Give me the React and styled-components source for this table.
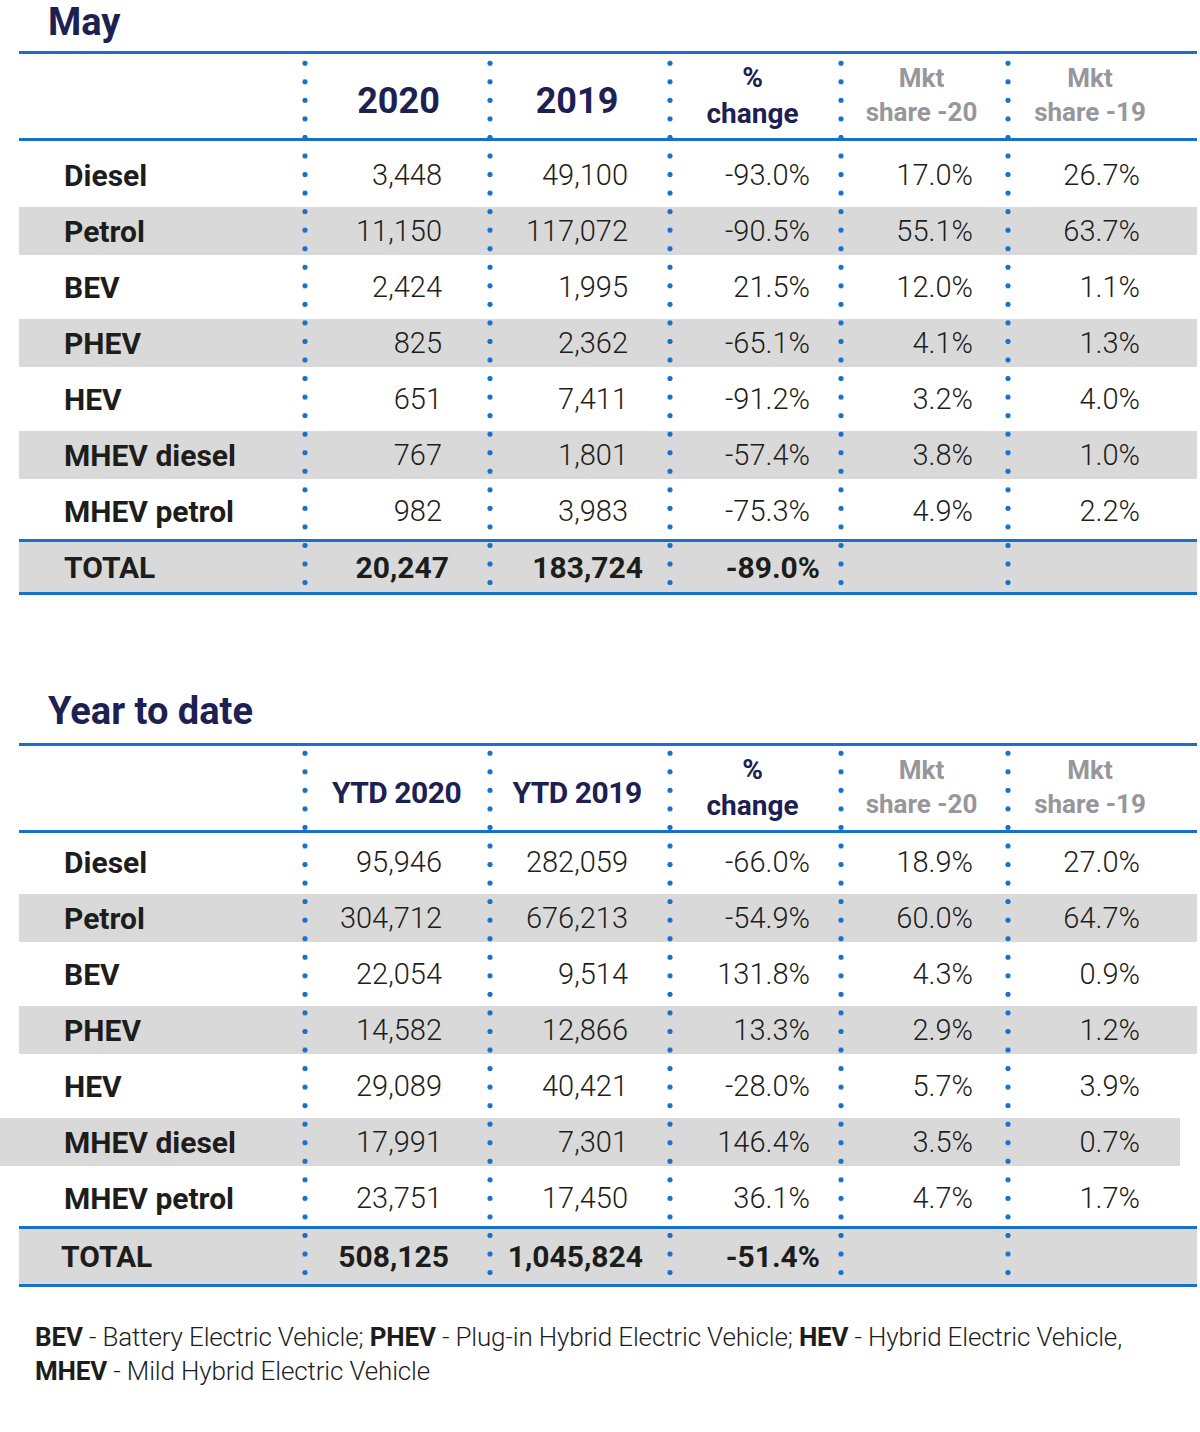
import React from "react";
import styled, { createGlobalStyle } from "styled-components";

const BLUE = "#1670cc";
const NAVY = "#1c2152";
const INK = "#1d1d1b";
const BAND = "#d9d9d9";
const COLS = "283px 185px 180px 171px 167px 192px";
const PAD = [45, 39, 28, 32, 57];
const TOTAL_PAD = [38, 24, 18, 32, 57];

const GlobalStyle = createGlobalStyle`
  body {
    margin: 0;
    background: #fff;
    font-family: Roboto, "Liberation Sans", sans-serif;
    color: ${INK};
  }
`;

const Page = styled.div`
  width: 1178px;
  padding-left: 19px;
`;

const Section = styled.section`
  margin-top: ${p => p.$top}px;
`;

const Title = styled.h2`
  margin: 0 0 ${p => p.$gap}px 29px;
  font-size: 38px;
  line-height: 44px;
  font-weight: 700;
  color: ${NAVY};
`;

const dot = `radial-gradient(circle, ${BLUE} 2.3px, transparent 2.9px)`;

const Table = styled.div`
  position: relative;
  border-top: 3px solid ${BLUE};
  border-bottom: 3px solid ${BLUE};

  /* dotted column separators lie over the row bands */
  &::after {
    content: "";
    position: absolute;
    top: ${p => p.$dotTop}px;
    bottom: 0;
    left: 0;
    right: 0;
    pointer-events: none;
    background-image: ${dot}, ${dot}, ${dot}, ${dot}, ${dot};
    background-size: 6px 18.55px;
    background-repeat: repeat-y;
    background-position: 283px 0, 468px 0, 648px 0, 819px 0, 986px 0;
  }
`;

const HeadRow = styled.div`
  display: grid;
  grid-template-columns: ${COLS};
  height: 84px;
  border-bottom: 3px solid ${BLUE};
`;

const HeadCell = styled.div`
  display: flex;
  flex-direction: column;
  align-items: center;
  justify-content: center;
  text-align: center;
  font-weight: 700;
  color: ${p => (p.$gray ? "#96969b" : NAVY)};
  font-size: ${p => p.$size}px;
  line-height: ${p => (p.$gray ? 34 : 36)}px;
  letter-spacing: ${p => (p.$size === 30 ? "-0.5px" : "0")};
  padding-top: ${p => (p.$year ? 9 : 0)}px;
  padding-bottom: ${p => (p.$gray ? 3 : 0)}px;
  padding-left: ${p => p.$shiftX || 0}px;
  padding-right: ${p => p.$trim || 0}px;
`;

const Body = styled.div`
  padding-top: ${p => p.$pad}px;
`;

const Row = styled.div`
  display: grid;
  grid-template-columns: ${COLS};
  align-items: center;
  height: 56px;
  box-sizing: border-box;
  background-image: ${p => (p.$band ? `linear-gradient(${BAND}, ${BAND})` : "none")};
  background-repeat: no-repeat;
  background-position: 0 center;
  background-size: ${p => (p.$shift ? "calc(100% - 17px)" : "100%")} 48px;
  margin-left: ${p => (p.$shift ? -19 : 0)}px;
  padding-left: ${p => (p.$shift ? 19 : 0)}px;
`;

const TotalRow = styled.div`
  display: grid;
  grid-template-columns: ${COLS};
  align-items: center;
  height: ${p => p.$height}px;
  border-top: 3px solid ${BLUE};
  background: ${BAND};
`;

const Label = styled.div`
  padding-left: ${p => p.$indent}px;
  font-size: 30px;
  font-weight: 700;
  white-space: nowrap;
`;

const Value = styled.div`
  text-align: right;
  padding-right: ${p => p.$pad}px;
  font-size: ${p => (p.$bold ? 30 : 29)}px;
  font-weight: ${p => (p.$bold ? 700 : 300)};
  white-space: nowrap;
`;

const Note = styled.p`
  margin: 33px 0 0 16px;
  font-size: 26px;
  line-height: 34px;
  font-weight: 300;
  letter-spacing: -0.15px;

  b {
    font-weight: 700;
  }
`;

const may = {
  title: "May",
  titleGap: 7,
  top: 0,
  heads: ["2020", "2019"],
  headSize: 36,
  headShift: 8,
  dotTop: 0,
  bodyPad: 6,
  rows: [
    ["Diesel", "3,448", "49,100", "-93.0%", "17.0%", "26.7%"],
    ["Petrol", "11,150", "117,072", "-90.5%", "55.1%", "63.7%"],
    ["BEV", "2,424", "1,995", "21.5%", "12.0%", "1.1%"],
    ["PHEV", "825", "2,362", "-65.1%", "4.1%", "1.3%"],
    ["HEV", "651", "7,411", "-91.2%", "3.2%", "4.0%"],
    ["MHEV diesel", "767", "1,801", "-57.4%", "3.8%", "1.0%"],
    ["MHEV petrol", "982", "3,983", "-75.3%", "4.9%", "2.2%"]
  ],
  total: ["20,247", "183,724", "-89.0%", "", ""],
  totalIndent: 45
};

const ytd = {
  title: "Year to date",
  titleGap: 10,
  top: 94,
  heads: ["YTD 2020", "YTD 2019"],
  headSize: 30,
  headShift: 4,
  dotTop: -2,
  bodyPad: 1,
  rows: [
    ["Diesel", "95,946", "282,059", "-66.0%", "18.9%", "27.0%"],
    ["Petrol", "304,712", "676,213", "-54.9%", "60.0%", "64.7%"],
    ["BEV", "22,054", "9,514", "131.8%", "4.3%", "0.9%"],
    ["PHEV", "14,582", "12,866", "13.3%", "2.9%", "1.2%"],
    ["HEV", "29,089", "40,421", "-28.0%", "5.7%", "3.9%"],
    ["MHEV diesel", "17,991", "7,301", "146.4%", "3.5%", "0.7%"],
    ["MHEV petrol", "23,751", "17,450", "36.1%", "4.7%", "1.7%"]
  ],
  total: ["508,125", "1,045,824", "-51.4%", "", ""],
  totalIndent: 42,
  shiftedRow: 5
};

const SalesTable = ({ data }) => (
  <Section $top={data.top}>
    <Title $gap={data.titleGap}>{data.title}</Title>
    <Table $dotTop={data.dotTop}>
      <HeadRow>
        <div />
        <HeadCell $size={data.headSize} $year $shiftX={data.headShift}>
          {data.heads[0]}
        </HeadCell>
        <HeadCell $size={data.headSize} $year>
          {data.heads[1]}
        </HeadCell>
        <HeadCell $size={28}>
          <span>%</span>
          <span>change</span>
        </HeadCell>
        <HeadCell $size={26} $gray>
          <span>Mkt</span>
          <span>share -20</span>
        </HeadCell>
        <HeadCell $size={26} $gray $trim={22}>
          <span>Mkt</span>
          <span>share -19</span>
        </HeadCell>
      </HeadRow>
      <Body $pad={data.bodyPad}>
        {data.rows.map(([label, ...values], i) => (
          <Row key={label} $band={i % 2 === 1} $shift={i === data.shiftedRow}>
            <Label $indent={45}>{label}</Label>
            {values.map((v, j) => (
              <Value key={j} $pad={PAD[j]}>
                {v}
              </Value>
            ))}
          </Row>
        ))}
      </Body>
      <TotalRow $height={56 - data.bodyPad}>
        <Label $indent={data.totalIndent}>TOTAL</Label>
        {data.total.map((v, j) => (
          <Value key={j} $pad={TOTAL_PAD[j]} $bold>
            {v}
          </Value>
        ))}
      </TotalRow>
    </Table>
  </Section>
);

const App = () => (
  <Page>
    <GlobalStyle />
    <SalesTable data={may} />
    <SalesTable data={ytd} />
    <Note>
      <b>BEV</b> - Battery Electric Vehicle; <b>PHEV</b> - Plug-in Hybrid Electric Vehicle;{" "}
      <b>HEV</b> - Hybrid Electric Vehicle,
      <br />
      <b>MHEV</b> - Mild Hybrid Electric Vehicle
    </Note>
  </Page>
);

export default App;
